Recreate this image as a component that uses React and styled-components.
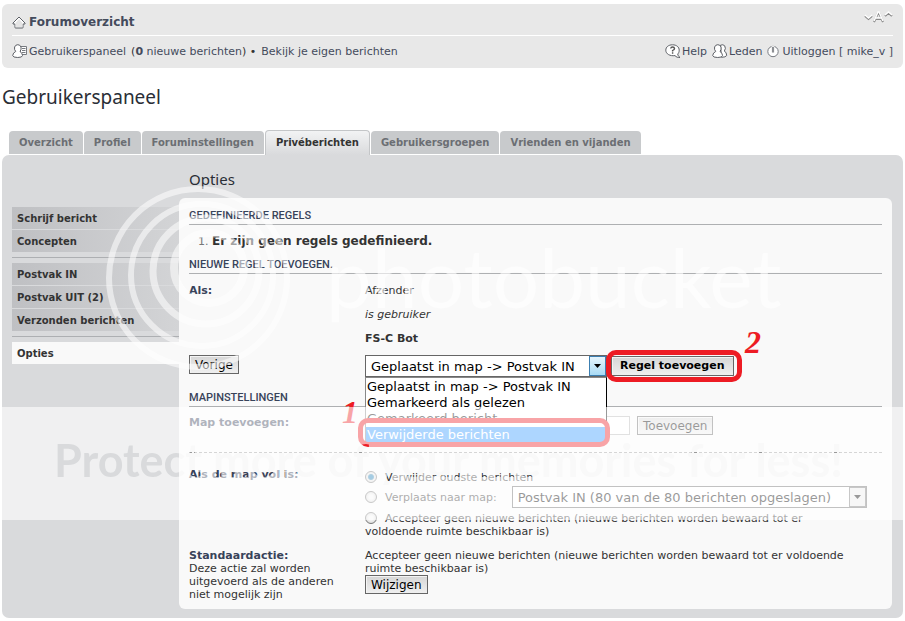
import styled, { createGlobalStyle, css } from "styled-components";

const GlobalStyle = createGlobalStyle`
  *,
  *::before,
  *::after {
    box-sizing: border-box;
  }

  body {
    margin: 0;
    padding: 4px 2px 3px;
    background-color: #fff;
    color: #333;
    font-family: "DejaVu Sans", Verdana, sans-serif;
    font-size: 11px;
    line-height: 13px;
  }

  h1, h2, h3, ul, ol, dl, dd, p {
    margin: 0;
    padding: 0;
    font-weight: normal;
  }

  ul {
    list-style: none;
  }

  a {
    color: #444b5c;
    text-decoration: none;
  }

  button, input, select {
    font-family: inherit;
    color: #000;
  }
`;

const Page = styled.div`
  position: relative;
`;

const Header = styled.header`
  padding: 4px 10px;
  background-color: #e8e8e8;
  border-radius: 6px;
`;

const HeaderRow = styled.div`
  display: flex;
  align-items: center;
  justify-content: space-between;
  height: 28px;
  padding-top: 2px;
  border-bottom: ${(props) => (props.$top ? "1px solid #fff" : "none")};
`;

const HeaderLinks = styled.div`
  display: flex;
  align-items: center;
  gap: 5px;
`;

const IconLink = styled.a`
  display: flex;
  align-items: center;
  gap: ${(props) => (props.$gap ? "3px" : "0")};
  font-weight: ${(props) => (props.$bold ? "bold" : "normal")};
  font-size: ${(props) => (props.$bold ? "12px" : "11px")};

  svg {
    flex: none;
  }
`;

const FontSize = styled.a`
  align-self: flex-start;
`;

const Title = styled.h1`
  margin: 15px 0 20px;
  color: #2a2e36;
  font-family: "Noto Sans", "Trebuchet MS", sans-serif;
  font-size: 19px;
  line-height: 28px;
`;

const Tabs = styled.ul`
  display: flex;
  align-items: flex-end;
  gap: 1px;
  height: 24px;
  padding-left: 7px;
`;

const TabLink = styled.a`
  display: block;
  height: 23px;
  margin-bottom: 1px;
  padding: 5px 10px 0;
  border-radius: 4px 4px 0 0;
  background-color: #c8cacc;
  color: #6b6e73;
  font-size: 10px;
  font-weight: bold;
  white-space: nowrap;

  ${(props) =>
    props.$active &&
    css`
      height: 25px;
      margin-bottom: 0;
      border: 1px solid #c4c6c8;
      border-bottom: none;
      background: linear-gradient(#f2f3f4, #d9dadc);
      color: #333;
    `}
`;

const Panel = styled.main`
  display: grid;
  grid-template-columns: 167px minmax(0, 1fr);
  padding: 11px 11px 9px 10px;
  border-radius: 7px;
  background-color: #d9dadc;
`;

const Sidebar = styled.nav`
  padding-top: 41px;
`;

const MenuGroup = styled.ul`
  display: grid;
  gap: 1px;
  padding-bottom: 5px;

  & + & {
    padding-top: 5px;
    border-top: 1px solid #adafb2;
  }
`;

const MenuLink = styled.a`
  display: block;
  padding: 5px 5px 4px;
  background: ${(props) =>
    props.$active ? "#f9f9f9" : "linear-gradient(90deg, #bfc0c3, #d3d4d6)"};
  color: #333;
  font-size: 10px;
  font-weight: bold;
`;

const Subtitle = styled.h2`
  padding: 2px 0 8px 10px;
  color: #2a2e36;
  font-family: "Noto Sans", "Trebuchet MS", sans-serif;
  font-size: 15px;
  line-height: 22px;
`;

const Content = styled.div`
  padding: 11px 10px 8px;
  border-radius: 6px;
  background-color: #f9f9f9;
`;

const SectionTitle = styled.h3`
  margin-top: ${(props) => (props.$spaced ? "14px" : "0")};
  padding-bottom: 2px;
  border-bottom: 1px solid #aeb0b2;
  color: #38435a;
  font-family: Roboto, Arial, sans-serif;
  font-size: 11px;
  font-weight: 500;
  text-transform: uppercase;
`;

const Rules = styled.ol`
  padding: 10px 0 10px 23px;
  font-size: 12px;

  li::marker {
    color: #777;
    font-size: 11px;
  }
`;

const Row = styled.dl`
  display: grid;
  grid-template-columns: 176px minmax(0, 1fr);
  padding-top: ${(props) => props.$top || 0}px;
`;

const Label = styled.dt`
  padding-right: 20px;
  color: #38435a;

  label,
  strong {
    font-weight: bold;
  }

  span {
    display: block;
    color: #333;
  }
`;

const Conditions = styled.dd`
  display: grid;
  gap: 11px;
`;

const Field = styled.dd`
  display: flex;
  align-items: flex-start;
  gap: ${(props) => props.$gap || 0}px;
`;

const Button = styled.button`
  height: ${(props) => (props.$primary ? "20px" : "19px")};
  margin: 0;
  padding: 0 ${(props) => (props.$primary ? "8px" : "5px")};
  border: 1px solid #666;
  border-radius: 0;
  background: linear-gradient(#d6d6d6, #efefef);
  box-shadow: inset 1px 1px #f4f4f4;
  font-size: ${(props) => (props.$primary ? "11px" : "12px")};
  font-weight: ${(props) => (props.$primary ? "bold" : "normal")};
  line-height: 16px;
`;

const SelectBox = styled.div`
  position: relative;
  display: flex;
  width: ${(props) => (props.$wide ? "355px" : "242px")};
`;

const Select = styled.select`
  width: 100%;
  height: 22px;
  margin: 0;
  padding: 0 20px 0 5px;
  border: 1px solid #666;
  border-radius: 0;
  appearance: none;
  background-color: #fff;
  font-size: 13px;
`;

const SelectArrow = styled.span`
  position: absolute;
  top: 1px;
  right: 1px;
  display: grid;
  place-items: center;
  width: 17px;
  height: 20px;
  border: 1px solid ${(props) => (props.$hot ? "#3c7fb1" : "#777")};
  background: ${(props) =>
    props.$hot ? "linear-gradient(#e6f5fd, #a9dbf5)" : "#eaeaea"};
  pointer-events: none;
`;

const OptionList = styled.ul`
  position: absolute;
  top: 22px;
  left: 0;
  width: 242px;
  padding-top: 1px;
  border: 1px solid #000;
  border-left-color: #888;
  border-top-color: #888;
  background-color: #fff;
  color: #000;
  font-size: 13px;
  line-height: 16px;
`;

const Option = styled.li`
  padding-left: 1px;
  background-color: ${(props) => (props.$selected ? "#3399ff" : "transparent")};
  color: ${(props) => (props.$selected ? "#fff" : "#000")};
`;

const PrimaryAction = styled.div`
  position: relative;
  padding-top: 1px;
`;

const Mark = styled.span`
  position: absolute;
  inset: ${(props) => props.$inset};
  border: 5px solid #ed1c24;
  border-radius: 10px;
  pointer-events: none;
`;

const MarkNumber = styled.span`
  position: absolute;
  top: ${(props) => props.$top}px;
  left: ${(props) => props.$left}px;
  color: #ed1c24;
  font-family: "Liberation Serif", "Times New Roman", serif;
  font-size: 32px;
  font-style: italic;
  font-weight: bold;
  line-height: 30px;
`;

const TextInput = styled.input`
  width: 265px;
  height: 19px;
  border: 1px solid #b4b4b4;
  background-color: #fff;
  font-size: 11px;
`;

const Divider = styled.hr`
  margin: 17px 0 0;
  border: none;
  border-top: 1px dashed #999;
`;

const Choice = styled.div`
  display: flex;
  align-items: center;
  min-height: 18px;
`;

const LongChoice = styled.div`
  padding: 4px 24px 0 0;
`;

const Radio = styled.input`
  flex: none;
  width: 12px;
  height: 12px;
  margin: 0 8px 0 0;
  border: 1px solid #777;
  border-radius: 50%;
  appearance: none;
  vertical-align: -2px;
  background: radial-gradient(#f4f4f4 30%, #cfcfcf);

  &:checked {
    background: radial-gradient(#1c7fb8 20%, #3a88b5 35%, #e4e4e4 50%);
  }
`;

const ChoiceLabel = styled.label`
  margin-right: 15px;
`;

const WatermarkSvg = styled.svg`
  position: absolute;
  top: -4px;
  left: -2px;
  pointer-events: none;
`;

function HomeIcon() {
  return (
    <svg width="14" height="13" viewBox="0 0 14 13">
      <path
        d="M7 1 1 7v1h2v3.5q0 .5.5.5h7q.5 0 .5-.5V8h2V7Z"
        fill="#fff"
        stroke="#5d6066"
      />
      <path d="m7 3-3.5 4v4h7V7Z" fill="#e4e4e4" />
    </svg>
  );
}

function PanelIcon() {
  return (
    <svg width="17" height="15" viewBox="0 0 17 15">
      <path d="M8.500 2.500h6v8h-6z" fill="#fff" stroke="#777a80" />
      <path d="M10 4.500h3.500M10 6.500h3.500M10 8.500h3.500" stroke="#777a80" />
      <path
        d="M3.700 7.500Q2 5.500 2.600 3 3.500.7 5.800.7T9 3q.6 2.500-1 4.500 2.500 1.500 2.500 4 0 2-4.800 2T.7 11.600q.3-3 3-4.100Z"
        fill="#fff"
        stroke="#5d6066"
      />
    </svg>
  );
}

function HelpIcon() {
  return (
    <svg width="17" height="15" viewBox="0 0 17 15">
      <path
        d="M7.500.8c4 0 6.700 2.200 6.700 5.400 0 1.700-.5 2.900-1.500 3.800.2 1.500.9 2.500 2.300 3.500-2 .2-3.800-.4-5-1.900-5 .7-9.200-1.600-9.200-5.400C.8 3 3.500.8 7.500.8Z"
        fill="#fff"
        stroke="#5d6066"
      />
      <path
        d="M5.700 4.500q.2-1.500 1.900-1.500t1.900 1.400q0 1-1.900 2.100v1M7.600 8.300v1.500"
        fill="none"
        stroke="#555"
        strokeWidth="1.400"
      />
    </svg>
  );
}

function MembersIcon() {
  return (
    <svg width="17" height="15" viewBox="0 0 17 15">
      <path
        d="M8.500 1.200q2.500-1.200 4.200.6 1.500 2.700-.3 5.200 2.200 1.500 2.300 4.500-1 1.800-5.200 1.800Z"
        fill="#fff"
        stroke="#5d6066"
      />
      <path
        d="M3.700 7.500Q2 5.500 2.600 3 3.500.7 5.800.7T9 3q.6 2.500-1 4.500 2.500 1.500 2.500 4 0 2-4.800 2T.7 11.600q.3-3 3-4.100Z"
        fill="#fff"
        stroke="#5d6066"
      />
    </svg>
  );
}

function LogoutIcon() {
  return (
    <svg width="12" height="13" viewBox="0 0 12 13">
      <circle cx="6" cy="6.500" r="5.200" fill="#fff" stroke="#777a80" />
      <path d="M6 1v6.500" stroke="#e8e8e8" strokeWidth="3" />
      <path d="M6 2v5.500" stroke="#5d6066" strokeWidth="1.300" />
    </svg>
  );
}

function FontSizeIcon() {
  return (
    <svg width="29" height="14" viewBox="0 0 29 14">
      <g fill="none" stroke="#888" strokeWidth="2" transform="translate(0 1)">
        <path d="m1 5 3.500 3L8 5M21 5l3.500-3L28 5M10 11l4-9h1l4 9M12 8h5" />
      </g>
      <g fill="none" stroke="#fff" strokeWidth="1.500">
        <path d="m1 5 3.500 3L8 5M21 5l3.500-3L28 5M10 11l4-9h1l4 9M12 8h5" />
      </g>
    </svg>
  );
}

function Arrow() {
  return (
    <svg width="7" height="4" viewBox="0 0 7 4">
      <path d="M0 0h7L3.500 4Z" />
    </svg>
  );
}

function Watermark() {
  return (
    <WatermarkSvg width="905" height="621" viewBox="0 0 905 621">
      <mask id="band">
        <rect y="407" width="905" height="113" fill="#fff" />
        <text
          x="54"
          y="477"
          fontFamily="Lato, sans-serif"
          fontSize="45"
          fontWeight="bold"
        >
          Protect more of your memories for less!
        </text>
      </mask>
      <rect
        y="407"
        width="905"
        height="113"
        fill="#fff"
        fillOpacity="0.600"
        mask="url(#band)"
      />
      <g fill="none" stroke="#fff" strokeOpacity="0.550">
        <circle cx="198" cy="278" r="89" strokeWidth="6" />
        <circle cx="202" cy="275" r="71" strokeWidth="6" />
        <circle cx="206" cy="271" r="53" strokeWidth="7" />
        <circle cx="209" cy="268" r="35" strokeWidth="8" />
      </g>
      <text
        x="326"
        y="308"
        fill="#fff"
        fillOpacity="0.600"
        fontFamily="Lato, sans-serif"
        fontSize="82"
      >
        photobucket
      </text>
    </WatermarkSvg>
  );
}

const tabs = [
  "Overzicht",
  "Profiel",
  "Foruminstellingen",
  "Privéberichten",
  "Gebruikersgroepen",
  "Vrienden en vijanden",
];

const menu = [
  ["Schrijf bericht", "Concepten"],
  ["Postvak IN", "Postvak UIT (2)", "Verzonden berichten"],
  ["Opties"],
];

const actions = [
  "Geplaatst in map -> Postvak IN",
  "Gemarkeerd als gelezen",
  "Gemarkeerd bericht",
  "Verwijderde berichten",
];

function App() {
  return (
    <Page>
      <GlobalStyle />

      <Header>
        <HeaderRow $top>
          <IconLink href="#" $bold $gap>
            <HomeIcon />
            Forumoverzicht
          </IconLink>
          <FontSize href="#" aria-label="Lettergrootte wijzigen">
            <FontSizeIcon />
          </FontSize>
        </HeaderRow>
        <HeaderRow>
          <HeaderLinks>
            <IconLink href="#">
              <PanelIcon />
              Gebruikerspaneel
            </IconLink>
            <span>
              (
              <a href="#">
                <strong>0</strong> nieuwe berichten
              </a>
              ) •
            </span>
            <a href="#">Bekijk je eigen berichten</a>
          </HeaderLinks>
          <HeaderLinks>
            <IconLink href="#">
              <HelpIcon />
              Help
            </IconLink>
            <IconLink href="#">
              <MembersIcon />
              Leden
            </IconLink>
            <IconLink href="#" $gap>
              <LogoutIcon />
              Uitloggen [ mike_v ]
            </IconLink>
          </HeaderLinks>
        </HeaderRow>
      </Header>

      <Title>Gebruikerspaneel</Title>

      <Tabs>
        {tabs.map((tab) => (
          <li key={tab}>
            <TabLink href="#" $active={tab === "Privéberichten"}>
              {tab}
            </TabLink>
          </li>
        ))}
      </Tabs>

      <Panel>
        <Sidebar>
          {menu.map((group) => (
            <MenuGroup key={group[0]}>
              {group.map((item) => (
                <li key={item}>
                  <MenuLink href="#" $active={item === "Opties"}>
                    {item}
                  </MenuLink>
                </li>
              ))}
            </MenuGroup>
          ))}
        </Sidebar>

        <div>
          <Subtitle>Opties</Subtitle>
          <Content>
            <SectionTitle>Gedefinieerde regels</SectionTitle>
            <Rules>
              <li>
                <strong>Er zijn geen regels gedefinieerd.</strong>
              </li>
            </Rules>

            <SectionTitle>Nieuwe regel toevoegen.</SectionTitle>
            <Row $top={10}>
              <Label>
                <strong>Als:</strong>
              </Label>
              <Conditions>
                <p>Afzender</p>
                <p>
                  <em>is gebruiker</em>
                </p>
                <p>
                  <strong>FS-C Bot</strong>
                </p>
              </Conditions>
            </Row>
            <Row $top={10}>
              <Label>
                <Button type="button">Vorige</Button>
              </Label>
              <Field $gap={4}>
                <SelectBox>
                  <Select aria-label="Actie" defaultValue={actions[0]}>
                    {actions.map((action) => (
                      <option key={action}>{action}</option>
                    ))}
                  </Select>
                  <SelectArrow $hot>
                    <Arrow />
                  </SelectArrow>
                  <OptionList>
                    {actions.map((action, i) => (
                      <Option key={action} $selected={i === 3}>
                        {action}
                      </Option>
                    ))}
                    <Mark $inset="40px -4px -4px -8px" />
                    <MarkNumber $top={19} $left={-24}>
                      1
                    </MarkNumber>
                  </OptionList>
                </SelectBox>
                <PrimaryAction>
                  <Button type="button" $primary>
                    Regel toevoegen
                  </Button>
                  <Mark $inset="-5px -8px -6px -5px" />
                  <MarkNumber $top={-28} $left={134}>
                    2
                  </MarkNumber>
                </PrimaryAction>
              </Field>
            </Row>

            <SectionTitle $spaced>Mapinstellingen</SectionTitle>
            <Row $top={9}>
              <Label>
                <label htmlFor="folder">Map toevoegen:</label>
              </Label>
              <Field $gap={7}>
                <TextInput id="folder" type="text" />
                <Button type="button">Toevoegen</Button>
              </Field>
            </Row>
            <Divider />

            <Row $top={15}>
              <Label>
                <strong>Als de map vol is:</strong>
              </Label>
              <dd>
                <Choice>
                  <Radio type="radio" name="full" id="oldest" defaultChecked />
                  <ChoiceLabel htmlFor="oldest">
                    Verwijder oudste berichten
                  </ChoiceLabel>
                </Choice>
                <Choice>
                  <Radio type="radio" name="full" id="move" />
                  <ChoiceLabel htmlFor="move">Verplaats naar map:</ChoiceLabel>
                  <SelectBox $wide>
                    <Select aria-label="Map">
                      <option>Postvak IN (80 van de 80 berichten opgeslagen)</option>
                    </Select>
                    <SelectArrow>
                      <Arrow />
                    </SelectArrow>
                  </SelectBox>
                </Choice>
                <LongChoice>
                  <Radio type="radio" name="full" id="hold" />
                  <label htmlFor="hold">
                    Accepteer geen nieuwe berichten (nieuwe berichten worden
                    bewaard tot er voldoende ruimte beschikbaar is)
                  </label>
                </LongChoice>
              </dd>
            </Row>

            <Row $top={11}>
              <Label>
                <strong>Standaardactie:</strong>
                <span>
                  Deze actie zal worden uitgevoerd als de anderen niet mogelijk
                  zijn
                </span>
              </Label>
              <dd>
                <p>
                  Accepteer geen nieuwe berichten (nieuwe berichten worden
                  bewaard tot er voldoende ruimte beschikbaar is)
                </p>
                <Button type="button">Wijzigen</Button>
              </dd>
            </Row>
          </Content>
        </div>
      </Panel>

      <Watermark />
    </Page>
  );
}

export default App;
